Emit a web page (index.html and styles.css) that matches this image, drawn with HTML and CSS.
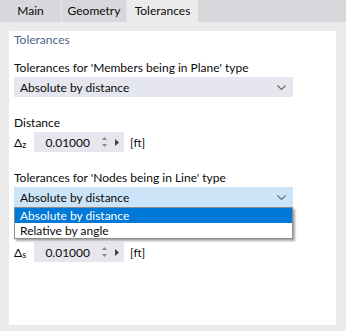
FILE: index.html
```html
<!DOCTYPE html>
<html lang="en">
<head>
    <meta charset="UTF-8">
    <title>Tolerances</title>
    <link rel="stylesheet" href="styles.css">
</head>
<body>
    <div class="tabs">
        <div class="tab tab-main">Main</div>
        <div class="tab tab-geometry">Geometry</div>
        <div class="tab tab-active">Tolerances</div>
    </div>
    <div class="content">
        <div class="panel">
            <div class="heading">Tolerances</div>

            <div class="label">Tolerances for 'Members being in Plane' type</div>
            <div class="combo">
                <span>Absolute by distance</span>
                <svg class="chevron" width="9" height="5" viewBox="0 0 9 5"><path d="M0.5 0.5 L4.5 4.5 L8.5 0.5" fill="none" stroke="#6b6b6b" stroke-width="1.1"/></svg>
            </div>

            <div class="label label-gap">Distance</div>
            <div class="field-row">
                <span class="sym">&Delta;<sub>z</sub></span>
                <div class="spin">
                    <span class="value">0.01000</span>
                    <svg class="arrows" width="7" height="12" viewBox="0 0 7 12"><path d="M1 4 L3.5 1 L6 4 Z M1 8 L3.5 11 L6 8 Z" fill="#8a8a8a"/></svg>
                    <svg class="play" width="4" height="7" viewBox="0 0 4 7"><path d="M0 0 L4 3.5 L0 7 Z" fill="#404040"/></svg>
                </div>
                <span class="unit">[ft]</span>
            </div>

            <div class="label label-gap">Tolerances for 'Nodes being in Line' type</div>
            <div class="combo-wrap">
                <div class="combo combo-open">
                    <span>Absolute by distance</span>
                    <svg class="chevron" width="9" height="5" viewBox="0 0 9 5"><path d="M0.5 0.5 L4.5 4.5 L8.5 0.5" fill="none" stroke="#6b6b6b" stroke-width="1.1"/></svg>
                </div>
                <ul class="dropdown">
                    <li class="selected">Absolute by distance</li>
                    <li>Relative by angle</li>
                </ul>
            </div>

            <!-- label under the open list is covered -->
            <div class="label label-gap"></div>
            <div class="field-row">
                <span class="sym">&Delta;<sub>s</sub></span>
                <div class="spin">
                    <span class="value">0.01000</span>
                    <svg class="arrows" width="7" height="12" viewBox="0 0 7 12"><path d="M1 4 L3.5 1 L6 4 Z M1 8 L3.5 11 L6 8 Z" fill="#8a8a8a"/></svg>
                    <svg class="play" width="4" height="7" viewBox="0 0 4 7"><path d="M0 0 L4 3.5 L0 7 Z" fill="#404040"/></svg>
                </div>
                <span class="unit">[ft]</span>
            </div>
        </div>
    </div>
</body>
</html>
```

FILE: styles.css
```css
body {
    margin: 0;
    padding: 0;
    width: 346px;
    height: 331px;
    overflow: hidden;
    background-color: #ebebeb;
    font-family: 'Segoe UI', Lato, sans-serif;
    font-size: 12px;
    color: #0a0a0a;
}
.tabs {
    display: flex;
    height: 22px;
    background-color: #d8d8dc;
}
.tab {
    height: 22px;
    line-height: 22px;
    box-sizing: border-box;
    text-align: center;
    color: #0a0a0a;
}
.tab-main {
    width: 62px;
    border-right: 1px solid #e6e6e8;
}
.tab-geometry {
    width: 65px;
    border-right: 1px solid #e6e6e8;
}
.tab-active {
    width: 71px;
    background-color: #ebebeb;
}
.content {
    padding: 9px 10px 6px 9px;
}
.panel {
    background: #ffffff;
    height: 294px;
    padding: 0 5px;
    box-sizing: border-box;
}
.heading {
    color: #4f5f89;
    height: 17px;
    line-height: 17px;
    margin-bottom: 12px;
}
.label {
    height: 15px;
    line-height: 15px;
    margin-bottom: 2px;
}
.label-gap {
    margin-top: 18px;
}
.combo {
    width: 279px;
    height: 20px;
    background-color: #e5e6ee;
    display: flex;
    align-items: center;
    justify-content: space-between;
    padding: 0 6px;
    box-sizing: border-box;
}
.combo-open {
    background-color: #cce4f7;
}
.chevron {
    margin-right: 1px;
}
.combo-wrap {
    position: relative;
    width: 279px;
}
.dropdown {
    position: absolute;
    top: 20px;
    left: 0;
    width: 279px;
    margin: 0;
    padding: 0;
    list-style-type: none;
    background: #ffffff;
    border: 1px solid #8c8c8c;
    box-sizing: border-box;
    box-shadow: 2px 2px 2px rgba(0, 0, 0, 0.35);
    z-index: 2;
}
.dropdown li {
    height: 15px;
    line-height: 15px;
    padding: 0 5px;
}
.dropdown li.selected {
    background-color: #0078d7;
    color: #ffffff;
}
.field-row {
    display: flex;
    align-items: center;
    height: 20px;
}
.sym {
    width: 20px;
}
.sym sub {
    font-size: 9px;
    vertical-align: -1px;
}
.spin {
    width: 90px;
    height: 20px;
    background-color: #e5e6ee;
    display: flex;
    align-items: center;
    justify-content: flex-end;
    padding-right: 5px;
    box-sizing: border-box;
}
.value {
    margin-right: 11px;
}
.arrows {
    margin-right: 7px;
}
.unit {
    margin-left: 6px;
}
```
